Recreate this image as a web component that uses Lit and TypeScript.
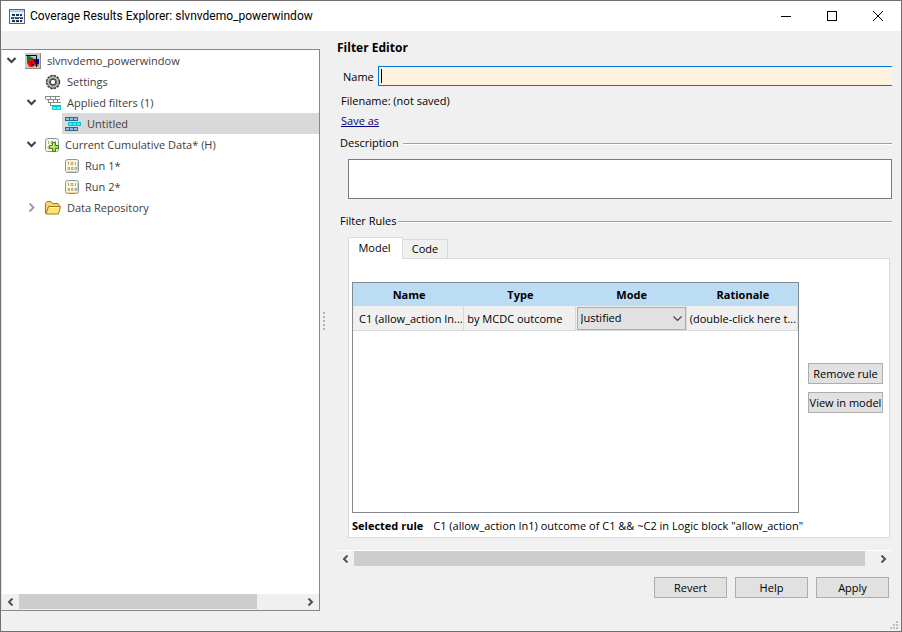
import { LitElement, html, css, svg, nothing } from "lit";
import { customElement, property } from "lit/decorators.js";

const icons = {
  app: svg`<svg width="16" height="15" viewBox="0 0 16 15" shape-rendering="crispEdges">
    <rect width="16" height="15" fill="#59636f"/>
    <path d="M1 1h14v2H1z" fill="#a4c4e4"/><path d="M1 1h14v1H1z" fill="#c4d8ec"/>
    <rect x="1" y="3" width="14" height="11" fill="#f2f5f8"/>
    <path d="M3 5h3v2H3zM7 5h3v2H7zM11 5h2v2h-2zM2 8h3v2H2zM6 8h4v2H6zM11 8h3v2h-3zM3 11h3v2H3zM7 11h3v2H7zM11 11h2v2h-2z" fill="#17365c"/>
    <path d="M2 8h12v1H2z" fill="#3974b0"/></svg>`,
  model: svg`<svg width="16" height="16" viewBox="0 0 16 16">
    <rect width="16" height="16" fill="#c6c6c6"/><path d="M15 0h1v16H0v-1h15z" fill="#8b8b8b"/>
    <rect x="7" y="6" width="7" height="5" fill="#0000e0"/><path d="M2 2l8 4-8 5z" fill="#0c7c28"/>
    <circle cx="6.500" cy="10.500" r="3.500" fill="#f00"/><path d="M1 2.500h10.500v9.500M9.500 12h4M11.500 10v4M6.500 9v2.500h2" fill="none" stroke="#000"/></svg>`,
  gear: svg`<svg width="16" height="16" viewBox="0 0 16 16">
    <circle cx="8" cy="8" r="6" fill="none" stroke="#3a3a3a" stroke-width="2.500" stroke-dasharray="2.200 .94"/>
    <circle cx="8" cy="8" r="4.600" fill="#fff" stroke="#4a4a4a" stroke-width="3.600"/>
    <circle cx="8" cy="8" r="4.800" fill="none" stroke="#b8b8b8" stroke-width="2"/>
    <circle cx="8" cy="8" r="2.700" fill="#fff" stroke="#3e3e3e"/></svg>`,
  filters: svg`<svg width="16" height="16" viewBox="0 0 16 16" shape-rendering="crispEdges">
    <path d="M.5 4V1.500h14M1 4.500h14M5.500 2v2M10.500 2v2M3.500 5v2.500h12M8.500 5v2M12.500 5v2M5.500 8v2.500h10" fill="none" stroke="#8a8a8a"/>
    <path d="M7 11h9v4H7z" fill="#00d8e4"/><path d="M8 12h3v2H8zM12 12h3v2h-3z" fill="#52ffff"/></svg>`,
  filter: svg`<svg width="16" height="14" viewBox="0 0 16 14" shape-rendering="crispEdges">
    <path d="M0 0h13v4H0zM0 10h13v4H0z" fill="#3d6288"/>
    <path d="M1 1h3v2H1zM5 1h3v2H5zM9 1h3v2H9zM1 11h3v2H1zM5 11h3v2H5zM9 11h3v2H9z" fill="#94bde6"/>
    <path d="M3 5h13v4H3z" fill="#00c8d8"/><path d="M4 6h3v2H4zM8 6h3v2H8zM12 6h3v2h-3z" fill="#20f6ff"/></svg>`,
  run: svg`<svg width="14" height="14" viewBox="0 0 14 14">
    <rect x=".5" y=".5" width="13" height="13" rx="2" fill="#fff8d6" stroke="#8398ae"/><path d="M2.500 12.500h9M12.500 2.500v9" stroke="#ecd58a"/>
    <path d="M2.500 3h1v3M6 3.500h2v2H6zM10.500 3v3M3 8.500h1.500v2H3zM6.500 8.500H8v2H6.500zM10 8.500h1.500v2H10z" fill="none" stroke="#9b9582" stroke-width=".8"/></svg>`,
  cumulative: svg`<svg width="14" height="14" viewBox="0 0 14 14" overflow="visible">
    <rect x=".5" y=".5" width="13" height="13" rx="2" fill="#fff8d6" stroke="#8398ae"/>
    <path d="M2.500 3h1v3M6 3.500h2v2H6zM10.500 3v2M3 8.500h1.500v2H3z" fill="none" stroke="#9b9582" stroke-width=".8"/>
    <path d="M7.500 4.500h3v3h3v3h-3v3h-3v-3h-3v-3h3z" fill="#a5e246" stroke="#3f7a22"/><path d="M8.500 5.500v3h-3" fill="none" stroke="#d8f7a0"/></svg>`,
  folder: svg`<svg width="16" height="14" viewBox="0 0 16 14">
    <path d="M.5 12.500v-10l1.500-2h4l1.500 2h5.500l1 1.500v2" fill="#f5d870" stroke="#a3781a"/>
    <path d="M1 13L3.500 5.500h12L13.500 13z" fill="#ffe472" stroke="#a3781a"/><path d="M4.500 6.500h9.500" stroke="#fff6bd"/></svg>`,
};

const left = svg`<svg width="7" height="8" viewBox="0 0 7 8"><path d="M5.500 .5L2 4l3.500 3.500" fill="none" stroke="#505050" stroke-width="2"/></svg>`;
const right = svg`<svg width="7" height="8" viewBox="0 0 7 8"><path d="M1.500 .5L5 4 1.500 7.500" fill="none" stroke="#505050" stroke-width="2"/></svg>`;

@customElement("scroll-strip")
class ScrollStrip extends LitElement {
  @property({ type: Number }) extent = 80;
  static styles = css`
    :host { display: flex; height: 16px; background: #f0f0f0; }
    button { width: 17px; flex: none; border: 0; padding: 0; background: none; display: flex; align-items: center; justify-content: center; }
    .track { flex: 1; display: flex; }
    .thumb { background: #cdcdcd; height: 15px; }
  `;
  render() {
    return html`<button aria-label="Scroll left">${left}</button>
      <div class="track"><div class="thumb" style="width:${this.extent}%"></div></div>
      <button aria-label="Scroll right">${right}</button>`;
  }
}

type Row = { depth: number; icon: keyof typeof icons; label: string; arrow?: "open" | "closed"; selected?: boolean };

const rows: Row[] = [
  { depth: 0, icon: "model", label: "slvnvdemo_powerwindow", arrow: "open" },
  { depth: 1, icon: "gear", label: "Settings" },
  { depth: 1, icon: "filters", label: "Applied filters (1)", arrow: "open" },
  { depth: 2, icon: "filter", label: "Untitled", selected: true },
  { depth: 1, icon: "cumulative", label: "Current Cumulative Data* (H)", arrow: "open" },
  { depth: 2, icon: "run", label: "Run 1*" },
  { depth: 2, icon: "run", label: "Run 2*" },
  { depth: 1, icon: "folder", label: "Data Repository", arrow: "closed" },
];

@customElement("results-tree")
class ResultsTree extends LitElement {
  static styles = css`
    :host { display: flex; flex-direction: column; background: #fff; border: 1px solid #828790; border-left-color: #e3e3e3; box-sizing: border-box; color: #404040; }
    ul { flex: 1; margin: 0; padding: 0; list-style: none; }
    li { display: flex; align-items: center; height: 21px; }
    .d1 { padding-left: 20px; }
    .d2 { padding-left: 40px; }
    .arrow { width: 18px; padding-right: 2px; display: flex; justify-content: center; flex: none; }
    .item { flex: 1; display: flex; align-items: center; gap: 6px; height: 21px; padding-left: 3px; white-space: nowrap; }
    .selected { background: #d9d9d9; }
    svg { flex: none; }
  `;
  render() {
    return html`<ul role="tree">
        ${rows.map((r) => html`<li role="treeitem" class="d${r.depth}">
          <span class="arrow">${r.arrow === "open"
            ? svg`<svg width="9" height="8" viewBox="0 0 9 8"><path d="M.5 1L4.500 5l4-4" fill="none" stroke="#404040" stroke-width="2"/></svg>`
            : r.arrow ? svg`<svg width="7" height="9" viewBox="0 0 7 9"><path d="M1.500 .5l4 4-4 4" fill="none" stroke="#a0a0a0" stroke-width="2"/></svg>` : nothing}</span>
          <span class="item ${r.selected ? "selected" : ""}">${icons[r.icon]}<span>${r.label}</span></span>
        </li>`)}
      </ul>
      <scroll-strip .extent=${84}></scroll-strip>`;
  }
}

@customElement("filter-editor")
class FilterEditor extends LitElement {
  static styles = css`
    :host { display: flex; flex-direction: column; min-width: 0; padding: 9px 9px 0 17px; }
    * { box-sizing: border-box; }
    h1 { margin: 0; font-size: 12px; line-height: 16px; }
    .name { display: flex; align-items: center; gap: 4px; margin-top: 10px; padding-left: 6px; }
    input { flex: 1; height: 20px; min-width: 0; border: 1px solid #0078d7; border-right: 0; background: linear-gradient(#000, #000) 2px 2px / 1px 14px no-repeat #fff3e0; caret-color: transparent; padding: 0 2px; outline: 0; font: inherit; }
    .file { margin: 7px 0 0 4px; line-height: 16px; }
    a { color: #000080; }
    .save { margin: 4px 0 0 4px; line-height: 16px; }
    .legend { display: flex; align-items: center; gap: 4px; margin: 6px 0 0 3px; line-height: 16px; }
    .legend::after { content: ""; flex: 1; height: 2px; margin-top: 2px; background: linear-gradient(#a0a0a0 50%, #fff 50%); }
    .rules { gap: 2px; margin-top: 14px; }
    textarea { display: block; height: 40px; margin: 8px 0 0 11px; resize: none; border: 1px solid #7a7a7a; background: #fff; outline: 0; font: inherit; }
    .tabs { display: flex; align-items: flex-end; margin: 8px 0 0 11px; height: 21px; }
    .tabs button { width: 45px; height: 19px; border: 1px solid #d9d9d9; border-width: 1px 1px 0 0; background: #f0f0f0; padding: 0 0 2px; font: inherit; color: #000; }
    .tabs .on { width: 55px; height: 22px; border-left-width: 1px; background: #fff; margin-bottom: -1px; z-index: 1; padding-right: 2px; }
    .panel { flex: 1; min-height: 0; display: grid; grid-template-columns: 1fr 75px; grid-template-rows: 1fr 24px; column-gap: 9px; margin: 0 2px 0 11px; padding: 23px 6px 0 3px; border: 1px solid #d9d9d9; background: #fff; }
    .grid { border: 1px solid #828790; min-width: 0; }
    table { width: 100%; table-layout: fixed; border-spacing: 0; }
    th { height: 23px; padding: 0 0 0 1px; background: #bcdcf4; }
    td { height: 25px; padding: 0 0 0 3px; background: #f0f0f0; border: 1px solid #d9d9d9; border-width: 0 1px 1px 0; white-space: nowrap; overflow: hidden; text-overflow: ellipsis; }
    td:first-child { padding-left: 6px; }
    td.mode { padding: 0 0 0 1px; }
    .combo { position: relative; display: block; }
    .combo svg { position: absolute; right: 4px; top: 9px; pointer-events: none; }
    select { display: block; width: 100%; height: 23px; appearance: none; border: 1px solid #adadad; border-radius: 0; background: #e1e1e1; font: inherit; padding: 0 3px 1px; color: #000; }
    .side { align-self: center; display: flex; flex-direction: column; gap: 8px; margin-bottom: 19px; }
    .btn { height: 21px; border: 1px solid #adadad; background: #e1e1e1; padding: 0; font: inherit; white-space: nowrap; color: #000; }
    .rule { grid-column: 1 / -1; display: flex; align-items: center; gap: 10px; white-space: nowrap; }
    scroll-strip { margin-top: 12px; border-top: 1px solid #fff; }
    .actions { display: flex; justify-content: flex-end; gap: 8px; padding: 11px 3px 33px 0; }
    .actions .btn { width: 73px; }
  `;
  firstUpdated() {
    this.renderRoot.querySelector("input")?.focus();
  }
  render() {
    return html`<h1>Filter Editor</h1>
      <div class="name"><label for="name">Name</label><input id="name" type="text" autofocus /></div>
      <div class="file">Filename: (not saved)</div>
      <div class="save"><a href="#save">Save as</a></div>
      <label class="legend" for="description">Description</label>
      <textarea id="description"></textarea>
      <div class="legend rules">Filter Rules</div>
      <div class="tabs" role="tablist"><button class="on" role="tab" aria-selected="true">Model</button><button role="tab" aria-selected="false">Code</button></div>
      <div class="panel">
        <div class="grid"><table>
          <thead><tr><th>Name</th><th>Type</th><th>Mode</th><th>Rationale</th></tr></thead>
          <tbody><tr><td>C1 (allow_action In...</td><td>by MCDC outcome</td>
            <td class="mode"><span class="combo"><select aria-label="Mode"><option>Justified</option></select><svg width="9" height="6" viewBox="0 0 9 6"><path d="M.5 .5l4 4 4-4" fill="none" stroke="#444" stroke-width="1.200"/></svg></span></td>
            <td>(double-click here t...</td></tr></tbody>
        </table></div>
        <div class="side"><button class="btn">Remove rule</button><button class="btn">View in model</button></div>
        <div class="rule"><b>Selected rule</b><span>C1 (allow_action In1) outcome of C1 &amp;&amp; ~C2 in Logic block "allow_action"</span></div>
      </div>
      <scroll-strip .extent=${98}></scroll-strip>
      <div class="actions"><button class="btn">Revert</button><button class="btn">Help</button><button class="btn">Apply</button></div>`;
  }
}

@customElement("app-root")
class AppRoot extends LitElement {
  static styles = css`
    :host { display: flex; flex-direction: column; height: 100vh; box-sizing: border-box; border: 1px solid #707070; background: #f0f0f0; color: #000; font: 11px "Open Sans", "Noto Sans", sans-serif; position: relative; overflow: hidden; }
    header { display: flex; align-items: center; height: 30px; flex: none; background: #fff; padding-left: 8px; font: 12px Roboto, "Open Sans", sans-serif; }
    .title { flex: 1; padding-left: 5px; }
    header button { width: 46px; height: 28px; padding: 0; border: 0; background: none; display: flex; align-items: center; justify-content: center; }
    header button svg { margin-bottom: 1px; }
    main { flex: 1; min-height: 0; display: grid; grid-template-columns: 319px 1fr; }
    results-tree { margin: 18px 0 20px; }
    .splitter { position: absolute; left: 322px; top: 311px; }
    .grip { position: absolute; right: 3px; bottom: 2px; }
  `;
  render() {
    return html`<header>${icons.app}<span class="title">Coverage Results Explorer: slvnvdemo_powerwindow</span>
        <button aria-label="Minimize"><svg width="10" height="10"><path d="M0 5.500h10" stroke="#000"/></svg></button>
        <button aria-label="Maximize"><svg width="10" height="10"><rect x=".5" y=".5" width="9" height="9" fill="none" stroke="#000"/></svg></button>
        <button aria-label="Close"><svg width="10" height="10"><path d="M0 0l10 10M10 0L0 10" stroke="#000"/></svg></button>
      </header>
      <main><results-tree></results-tree><filter-editor></filter-editor></main>
      <svg class="splitter" width="2" height="18" shape-rendering="crispEdges"><path d="M1 0v18" stroke="#b4b4b4" stroke-width="2" stroke-dasharray="2 2"/></svg>
      <svg class="grip" width="8" height="8" shape-rendering="crispEdges" fill="#bfbfbf"><path d="M6 0h2v2H6zM3 3h2v2H3zM6 3h2v2H6zM0 6h2v2H0zM3 6h2v2H3zM6 6h2v2H6z"/></svg>`;
  }
}
